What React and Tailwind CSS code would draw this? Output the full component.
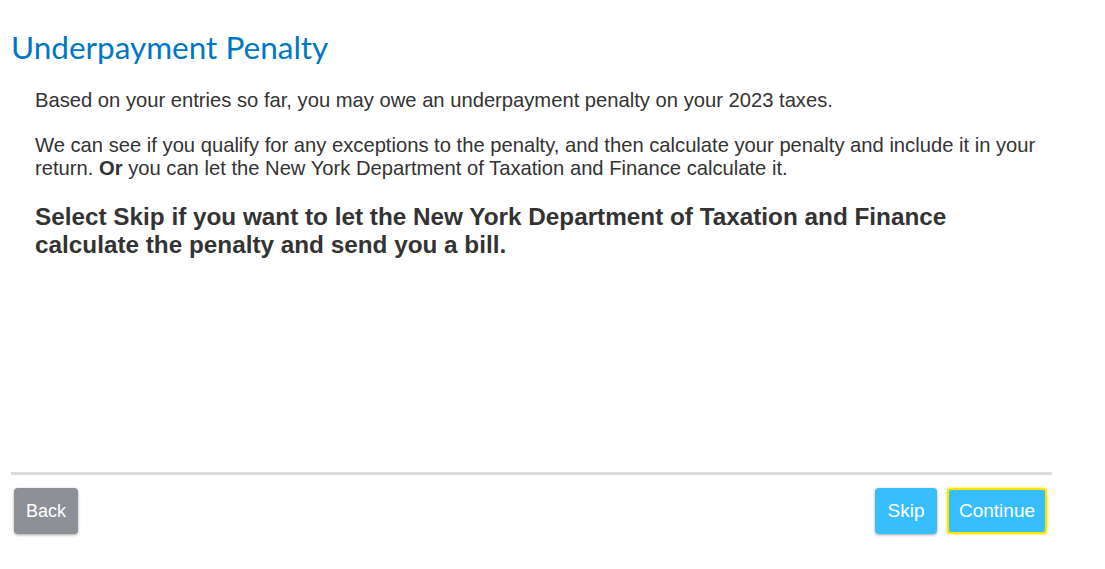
export default function App() {
  return (
    <div className="w-[1105px] h-[569px] bg-white" style={{ fontFamily: '"Liberation Sans", Arial, sans-serif' }}>
      <div className="w-[1041px] ml-[11px]">
        <h1 className="pt-[29px] text-[31.5px] leading-[36px] text-[#0077c5] font-normal" style={{ fontFamily: 'Lato, "Open Sans", sans-serif' }}>
          Underpayment Penalty
        </h1>
        <div className="pl-[24px] pr-[4px] pt-[24px] text-[#333333] text-[20.2px] leading-[23px]">
          <p>Based on your entries so far, you may owe an underpayment penalty on your 2023 taxes.</p>
          <p className="mt-[22px]">
            We can see if you qualify for any exceptions to the penalty, and then calculate your penalty and include it in your return. <b>Or</b> you can let the New York Department of Taxation and Finance calculate it.
          </p>
          <p className="mt-[23px] font-bold text-[24.3px] leading-[28px]">
            Select Skip if you want to let the New York Department of Taxation and Finance calculate the penalty and send you a bill.
          </p>
        </div>
        <div className="mt-[213px] h-[3px] bg-[#dcdcdc]"></div>
        <div className="flex items-center mt-[13px] pl-[3px] pr-[5px]">
          <button className="h-[46px] w-[64px] rounded-[4px] bg-[#8d9096] text-white text-[18px] shadow-[0_1px_3px_rgba(0,0,0,0.35)]">Back</button>
          <div className="flex-1"></div>
          <button className="h-[46px] w-[62px] rounded-[4px] bg-[#38beff] text-white text-[19px] shadow-[0_1px_3px_rgba(0,0,0,0.35)]">Skip</button>
          <button className="ml-[10px] h-[46px] w-[100px] rounded-[4px] bg-[#38beff] text-white text-[19px] border-2 border-[#ffe600] shadow-[0_0_3px_#ffe600]">Continue</button>
        </div>
      </div>
    </div>
  );
}
